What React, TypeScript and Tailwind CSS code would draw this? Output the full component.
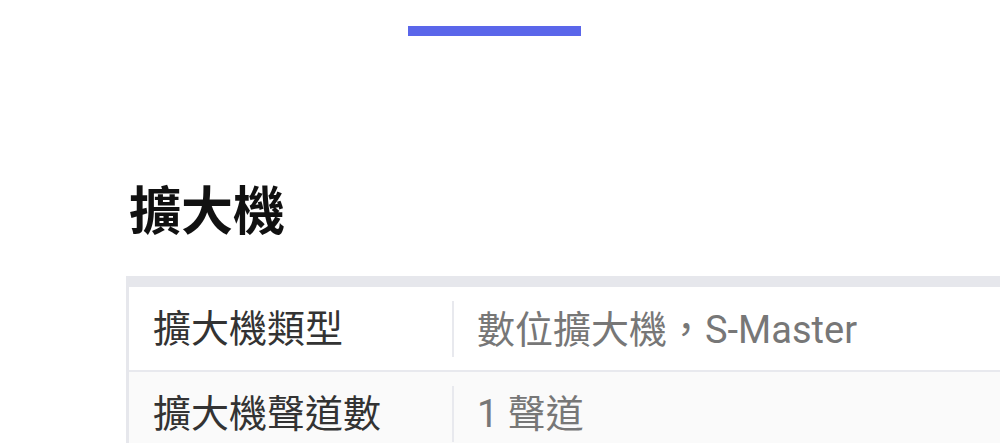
const ROWS = [
  { label: "擴大機類型", value: ["數位擴大機", "，", "S-Master"], bg: "bg-white" },
  { label: "擴大機聲道數", value: ["1 聲道"], bg: "bg-[#fafafa]" },
]

export default function App() {
  return (
    <div lang="zh-Hant-TW" className="w-[1000px] h-[443px] overflow-hidden bg-white font-['Roboto','Noto_Sans_CJK_TC',sans-serif]">
      {/* Tab indicator */}
      <div className="pt-[26px] pl-[408px]">
        <div className="w-[173px] h-[10px] bg-[#5a66ea]" />
      </div>

      {/* Section title */}
      <h2 className="mt-[151px] ml-[129px] text-[52px] font-bold leading-none text-[#111]">擴大機</h2>

      {/* Spec table */}
      <div className="mt-[37px] ml-[126px] border-l-[3px] border-t-[11px] border-[#e6e7ec]">
        {ROWS.map((r) => (
          <div key={r.label} className={`flex items-center h-[85px] border-b-2 border-[#e8e9ee] ${r.bg}`}>
            <div className="w-[323px] shrink-0 pl-[24px] text-[38px] leading-none text-[#333]">{r.label}</div>
            <div className="w-[2px] h-[56px] bg-[#e8e9ee] shrink-0" />
            <div className="pl-[23px] text-[38px] leading-none text-[#777] whitespace-nowrap">
              {r.value.map((v, i) =>
                v === "，" ? (
                  <span key={i} lang="zh-TW" className="font-['Noto_Sans_CJK_TC',sans-serif] [font-feature-settings:'locl']">{v}</span>
                ) : (
                  <span key={i}>{v}</span>
                )
              )}
            </div>
          </div>
        ))}
      </div>
    </div>
  )
}
